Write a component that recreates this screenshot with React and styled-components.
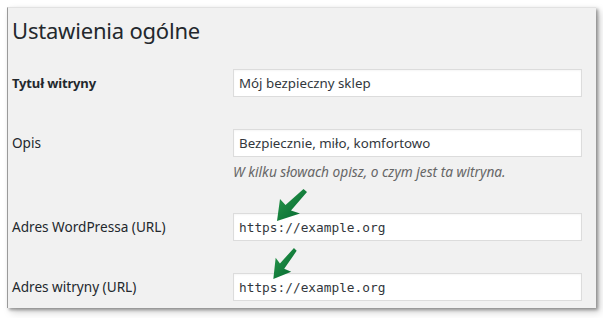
import React from "react";
import styled, { createGlobalStyle } from "styled-components";

const Global = createGlobalStyle`
  html, body { margin: 0; padding: 0; background: #ffffff; }
  body { font-family: "Noto Sans", "Open Sans", sans-serif; }
  * { box-sizing: border-box; }
`;

const Stage = styled.div`
  width: 603px;
  height: 318px;
  padding: 7px 0 0 7px;
  background: #fff;
`;

const Panel = styled.div`
  width: 589px;
  height: 301px;
  background: #f1f1f1;
  border-left: 1px solid #9a9a9a;
  border-top: 1px solid #e2e2e2;
  box-shadow: 2px 2px 3px rgba(0, 0, 0, 0.35), 4px 4px 8px rgba(0, 0, 0, 0.18);
  padding: 7px 0 0 4px;
  display: flex;
  flex-direction: column;
`;

const Heading = styled.h1`
  margin: 0;
  font-size: 22px;
  font-weight: 400;
  color: #23282d;
  line-height: 30px;
  letter-spacing: -0.2px;
`;

const Row = styled.div`
  display: grid;
  grid-template-columns: 221px 349px;
  align-items: start;
  margin-top: ${(p) => p.$top}px;
`;

const Label = styled.div`
  font-size: ${(p) => (p.$bold ? "13px" : "13.6px")};
  font-weight: ${(p) => (p.$bold ? 700 : 400)};
  color: #23282d;
  line-height: 28px;
  letter-spacing: ${(p) => (p.$bold ? "-0.15px" : "0")};
`;

const Field = styled.div`
  position: relative;
  display: flex;
  flex-direction: column;
`;

const Input = styled.div`
  height: 28px;
  background: #fff;
  border: 1px solid #dcdcdc;
  box-shadow: inset 0 1px 2px rgba(0, 0, 0, 0.04);
  padding: 0 5px;
  display: flex;
  align-items: center;
  color: #32373c;
  font-family: ${(p) =>
    p.$mono ? '"DejaVu Sans Mono", "Liberation Mono", monospace' : '"Noto Sans", sans-serif'};
  font-size: ${(p) => (p.$mono ? "12.8px" : "13.3px")};
`;

const Hint = styled.p`
  margin: 6px 0 0;
  font-size: 13.7px;
  font-style: italic;
  color: #666;
  line-height: 18px;
`;

const ArrowWrap = styled.svg`
  position: absolute;
  left: ${(p) => p.$x}px;
  top: ${(p) => p.$y}px;
  overflow: visible;
`;

const Arrow = ({ id, x, y, w, h }) => (
  <ArrowWrap $x={x} $y={y} width={w} height={h} viewBox="0 0 36 36" preserveAspectRatio="none">
    <defs>
      <linearGradient id={id} x1="0" y1="0" x2="1" y2="1">
        <stop offset="0" stopColor="#2a9a4c" />
        <stop offset="0.6" stopColor="#117a3a" />
        <stop offset="1" stopColor="#0a6530" />
      </linearGradient>
    </defs>
    <polygon
      points="3,34 6,12 11.5,18 29.5,2 33,5 17,23.5 26,26.5"
      fill={`url(#${id})`}
    />
  </ArrowWrap>
);

export default function App() {
  return (
    <>
      <Global />
      <Stage>
        <Panel>
          <Heading>Ustawienia ogólne</Heading>
          <Row $top={24}>
            <Label $bold>Tytuł witryny</Label>
            <Field>
              <Input>Mój bezpieczny sklep</Input>
            </Field>
          </Row>
          <Row $top={32}>
            <Label>Opis</Label>
            <Field>
              <Input>Bezpiecznie, miło, komfortowo</Input>
              <Hint>W kilku słowach opisz, o czym jest ta witryna.</Hint>
            </Field>
          </Row>
          <Row $top={32}>
            <Label>Adres WordPressa (URL)</Label>
            <Field>
              <Arrow id="a1" x={41} y={-26} w={36} h={36} />
              <Input $mono>https://example.org</Input>
            </Field>
          </Row>
          <Row $top={32}>
            <Label>Adres witryny (URL)</Label>
            <Field>
              <Arrow id="a2" x={38} y={-27} w={28} h={35} />
              <Input $mono>https://example.org</Input>
            </Field>
          </Row>
        </Panel>
      </Stage>
    </>
  );
}
